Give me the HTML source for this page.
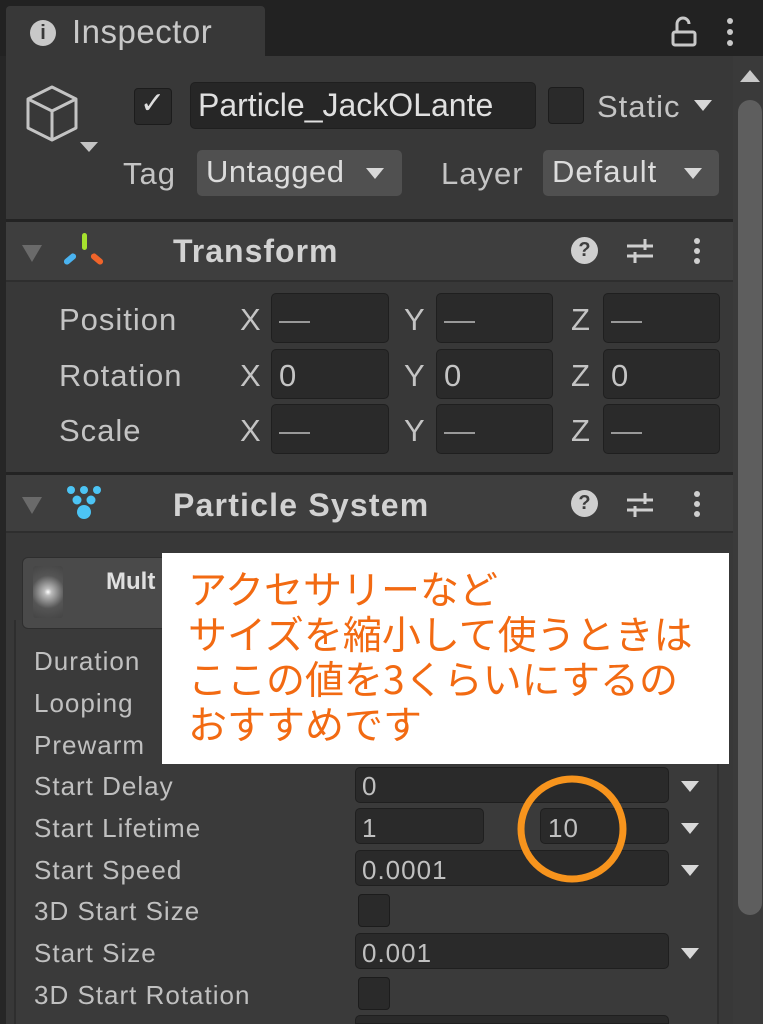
<!DOCTYPE html>
<html style="width:763px;height:1024px;overflow:hidden"><head><meta charset="utf-8"><style>
*{margin:0;padding:0;box-sizing:border-box}
body{width:763px;height:1024px;overflow:hidden;background:#383838;font-family:"Liberation Sans","DejaVu Sans",sans-serif;color:#c8c8c8;position:relative}
.a{position:absolute}
.t{position:absolute;white-space:nowrap}
.f{position:absolute;background:#2a2a2a;border:1px solid #1f1f1f;border-radius:5px}
.lbl{font-size:31px;letter-spacing:1px;color:#c4c4c4}
.sm{font-size:26px;letter-spacing:1px;color:#c0c0c0}
.arr{position:absolute;width:0;height:0;border-left:9px solid transparent;border-right:9px solid transparent;border-top:11px solid #d8d8d8}
.cb{position:absolute;background:#2a2a2a;border:1px solid #1c1c1c;border-radius:4px}
</style></head><body>
<div class="a" style="left:0;top:0;width:763px;height:56px;background:#222"></div>
<div class="a" style="left:6px;top:6px;width:259px;height:52px;background:#383838;border-radius:4px 4px 0 0"></div>
<div class="a" style="left:30px;top:20px;width:26px;height:26px;border-radius:50%;background:#c8c8c8;color:#383838;font-weight:bold;font-size:20px;text-align:center;line-height:26px">i</div>
<div class="t" style="left:72px;top:13px;font-size:33px;letter-spacing:0.5px;color:#c8c8c8">Inspector</div>
<svg class="a" style="left:670px;top:14px" width="30" height="34"><g fill="none" stroke="#c8c8c8" stroke-width="3"><rect x="3" y="18" width="22" height="13" rx="2"/><path d="M7 18 V10 a6 6 0 0 1 12 0"/></g></svg>
<div class="a" style="left:727px;top:18px;width:6px;height:6px;background:#c8c8c8;border-radius:50%;box-shadow:0 11px #c8c8c8,0 22px #c8c8c8"></div>
<div class="a" style="left:0;top:56px;width:6px;height:968px;background:#262626"></div>
<div class="a" style="left:733px;top:56px;width:30px;height:968px;background:#3a3a3a"></div>
<div class="a" style="left:740px;top:70px;border-left:10px solid transparent;border-right:10px solid transparent;border-bottom:12px solid #c8c8c8"></div>
<div class="a" style="left:738px;top:100px;width:24px;height:815px;background:#5e5e5e;border-radius:12px"></div>
<svg class="a" style="left:24px;top:84px" width="80" height="72" viewBox="0 0 80 72"><g fill="none" stroke="#c4c4c4" stroke-width="3" stroke-linejoin="round"><path d="M28 3 L52 15 L52 44 L28 56 L4 44 L4 15 Z"/><path d="M4 15 L28 27 L52 15 M28 27 L28 56"/></g><path d="M56 58 L74 58 L65 68 Z" fill="#c4c4c4"/></svg>
<div class="cb" style="left:134px;top:88px;width:38px;height:37px"></div>
<div class="t" style="left:140px;top:86px;font-size:30px;color:#ddd">✓</div>
<div class="f" style="left:190px;top:82px;width:346px;height:47px;background:#262626"></div>
<div class="t" style="left:198px;top:87px;font-size:32px;color:#e0e0e0;width:332px;overflow:hidden">Particle_JackOLante</div>
<div class="cb" style="left:548px;top:87px;width:36px;height:37px"></div>
<div class="t lbl" style="left:597px;top:89px">Static</div>
<div class="arr" style="left:694px;top:100px"></div>
<div class="t lbl" style="left:123px;top:156px">Tag</div>
<div class="a" style="left:197px;top:150px;width:205px;height:46px;background:#505050;border-radius:5px"></div>
<div class="t lbl" style="left:206px;top:154px;color:#dcdcdc;letter-spacing:0.5px">Untagged</div>
<div class="arr" style="left:366px;top:168px"></div>
<div class="t lbl" style="left:441px;top:156px">Layer</div>
<div class="a" style="left:543px;top:150px;width:176px;height:46px;background:#505050;border-radius:5px"></div>
<div class="t lbl" style="left:552px;top:154px;color:#dcdcdc">Default</div>
<div class="arr" style="left:684px;top:168px"></div>
<div class="a" style="left:6px;top:219px;width:727px;height:3px;background:#232323"></div>
<div class="a" style="left:6px;top:222px;width:727px;height:58px;background:#3e3e3e"></div>
<div class="a" style="left:6px;top:280px;width:727px;height:2px;background:#2e2e2e"></div>
<div class="a" style="left:22px;top:245px;border-left:10px solid transparent;border-right:10px solid transparent;border-top:17px solid #6a6a6a"></div>
<svg class="a" style="left:64px;top:232px" width="40" height="40" viewBox="0 0 40 40"><rect x="18" y="1" width="5" height="17" rx="2.5" fill="#a6e22e"/><rect x="3" y="20" width="6" height="14" rx="3" fill="#4ab3f0" transform="rotate(50 6 27)"/><rect x="30" y="20" width="6" height="14" rx="3" fill="#f0642a" transform="rotate(-50 33 27)"/></svg>
<div class="t" style="left:173px;top:233px;font-size:32px;letter-spacing:1px;font-weight:bold;color:#d2d2d2">Transform</div>
<div class="a" style="left:571px;top:237px;width:27px;height:27px;border-radius:50%;background:#cfcfcf;color:#3e3e3e;font-weight:bold;font-size:20px;text-align:center;line-height:27px">?</div>
<svg class="a" style="left:625px;top:236px" width="30" height="30"><g stroke="#cfcfcf" stroke-width="3"><path d="M2 10 H28 M2 20 H28 M20 3 V14 M10 16 V27"/></g></svg>
<div class="a" style="left:694px;top:238px;width:6px;height:6px;background:#cfcfcf;border-radius:50%;box-shadow:0 10px #cfcfcf,0 20px #cfcfcf"></div>
<div class="t lbl" style="left:59px;top:302px">Position</div>
<div class="t lbl" style="left:59px;top:358px">Rotation</div>
<div class="t lbl" style="left:59px;top:413px">Scale</div>
<div class="t lbl" style="left:240px;top:302px">X</div><div class="t lbl" style="left:404px;top:302px">Y</div><div class="t lbl" style="left:571px;top:302px">Z</div>
<div class="t lbl" style="left:240px;top:358px">X</div><div class="t lbl" style="left:404px;top:358px">Y</div><div class="t lbl" style="left:571px;top:358px">Z</div>
<div class="t lbl" style="left:240px;top:413px">X</div><div class="t lbl" style="left:404px;top:413px">Y</div><div class="t lbl" style="left:571px;top:413px">Z</div>
<div class="f" style="left:271px;top:293px;width:118px;height:50px"></div><div class="f" style="left:436px;top:293px;width:117px;height:50px"></div><div class="f" style="left:603px;top:293px;width:117px;height:50px"></div>
<div class="f" style="left:271px;top:349px;width:118px;height:50px"></div><div class="f" style="left:436px;top:349px;width:117px;height:50px"></div><div class="f" style="left:603px;top:349px;width:117px;height:50px"></div>
<div class="f" style="left:271px;top:404px;width:118px;height:50px"></div><div class="f" style="left:436px;top:404px;width:117px;height:50px"></div><div class="f" style="left:603px;top:404px;width:117px;height:50px"></div>
<div class="t lbl" style="left:279px;top:302px;color:#999">—</div><div class="t lbl" style="left:444px;top:302px;color:#999">—</div><div class="t lbl" style="left:611px;top:302px;color:#999">—</div>
<div class="t lbl" style="left:279px;top:358px">0</div><div class="t lbl" style="left:444px;top:358px">0</div><div class="t lbl" style="left:611px;top:358px">0</div>
<div class="t lbl" style="left:279px;top:413px;color:#999">—</div><div class="t lbl" style="left:444px;top:413px;color:#999">—</div><div class="t lbl" style="left:611px;top:413px;color:#999">—</div>
<div class="a" style="left:6px;top:472px;width:727px;height:3px;background:#232323"></div>
<div class="a" style="left:6px;top:475px;width:727px;height:56px;background:#3e3e3e"></div>
<div class="a" style="left:6px;top:531px;width:727px;height:2px;background:#2e2e2e"></div>
<div class="a" style="left:22px;top:497px;border-left:10px solid transparent;border-right:10px solid transparent;border-top:17px solid #6a6a6a"></div>
<svg class="a" style="left:64px;top:484px" width="40" height="40" viewBox="0 0 40 40" fill="#4cc4f4"><circle cx="7" cy="6" r="4"/><circle cx="20" cy="6" r="4"/><circle cx="33" cy="6" r="4"/><circle cx="13" cy="16" r="4.5"/><circle cx="27" cy="16" r="4.5"/><circle cx="20" cy="28" r="7"/></svg>
<div class="t" style="left:173px;top:487px;font-size:32px;letter-spacing:1.2px;font-weight:bold;color:#d2d2d2">Particle System</div>
<div class="a" style="left:571px;top:490px;width:27px;height:27px;border-radius:50%;background:#cfcfcf;color:#3e3e3e;font-weight:bold;font-size:20px;text-align:center;line-height:27px">?</div>
<svg class="a" style="left:625px;top:490px" width="30" height="30"><g stroke="#cfcfcf" stroke-width="3"><path d="M2 10 H28 M2 20 H28 M20 3 V14 M10 16 V27"/></g></svg>
<div class="a" style="left:694px;top:491px;width:6px;height:6px;background:#cfcfcf;border-radius:50%;box-shadow:0 10px #cfcfcf,0 20px #cfcfcf"></div>
<div class="a" style="left:14px;top:620px;width:705px;height:404px;border-left:2px solid #2e2e2e;border-right:2px solid #2e2e2e;background:#3a3a3a"></div>
<div class="a" style="left:22px;top:557px;width:200px;height:72px;background:#4a4a4a;border-radius:6px;border:1px solid #2e2e2e"></div>
<div class="a" style="left:33px;top:566px;width:30px;height:52px;background:radial-gradient(circle at 50% 50%,#fff 0,#bbb 12%,#555 55%,#444 100%);border-radius:3px"></div>
<div class="t" style="left:106px;top:568px;font-size:24px;font-weight:bold;color:#e0e0e0">Mult</div>
<div class="t sm" style="left:34px;top:646px">Duration</div>
<div class="t sm" style="left:34px;top:688px">Looping</div>
<div class="t sm" style="left:34px;top:730px">Prewarm</div>
<div class="t sm" style="left:34px;top:771px">Start Delay</div>
<div class="t sm" style="left:34px;top:813px">Start Lifetime</div>
<div class="t sm" style="left:34px;top:855px">Start Speed</div>
<div class="t sm" style="left:34px;top:896px">3D Start Size</div>
<div class="t sm" style="left:34px;top:938px">Start Size</div>
<div class="t sm" style="left:34px;top:980px">3D Start Rotation</div>
<div class="f" style="left:355px;top:767px;width:314px;height:36px"></div>
<div class="t sm" style="left:362px;top:771px">0</div>
<div class="arr" style="left:681px;top:781px"></div>
<div class="f" style="left:355px;top:808px;width:129px;height:36px"></div>
<div class="t sm" style="left:362px;top:813px">1</div>
<div class="f" style="left:540px;top:808px;width:129px;height:36px"></div>
<div class="t sm" style="left:548px;top:813px">10</div>
<div class="arr" style="left:681px;top:823px"></div>
<div class="f" style="left:355px;top:850px;width:314px;height:36px"></div>
<div class="t sm" style="left:362px;top:855px">0.0001</div>
<div class="arr" style="left:681px;top:865px"></div>
<div class="cb" style="left:358px;top:894px;width:32px;height:33px"></div>
<div class="f" style="left:355px;top:933px;width:314px;height:36px"></div>
<div class="t sm" style="left:362px;top:938px">0.001</div>
<div class="arr" style="left:681px;top:948px"></div>
<div class="cb" style="left:358px;top:977px;width:32px;height:33px"></div>
<div class="f" style="left:355px;top:1015px;width:314px;height:9px;border-radius:5px 5px 0 0"></div>
<div class="a" style="left:162px;top:553px;width:567px;height:211px;background:#fff"></div>
<div class="a" style="left:188px;top:566px;font-family:'Noto Sans CJK JP','WenQuanYi Zen Hei',sans-serif;font-size:39px;line-height:45px;color:#f26a12;white-space:nowrap">アクセサリーなど<br>サイズを縮小して使うときは<br>ここの値を3くらいにするの<br>おすすめです</div>
<svg class="a" style="left:512px;top:770px" width="122" height="120"><ellipse cx="60" cy="59" rx="51" ry="50" fill="none" stroke="#f7941d" stroke-width="7"/></svg>
</body></html>
